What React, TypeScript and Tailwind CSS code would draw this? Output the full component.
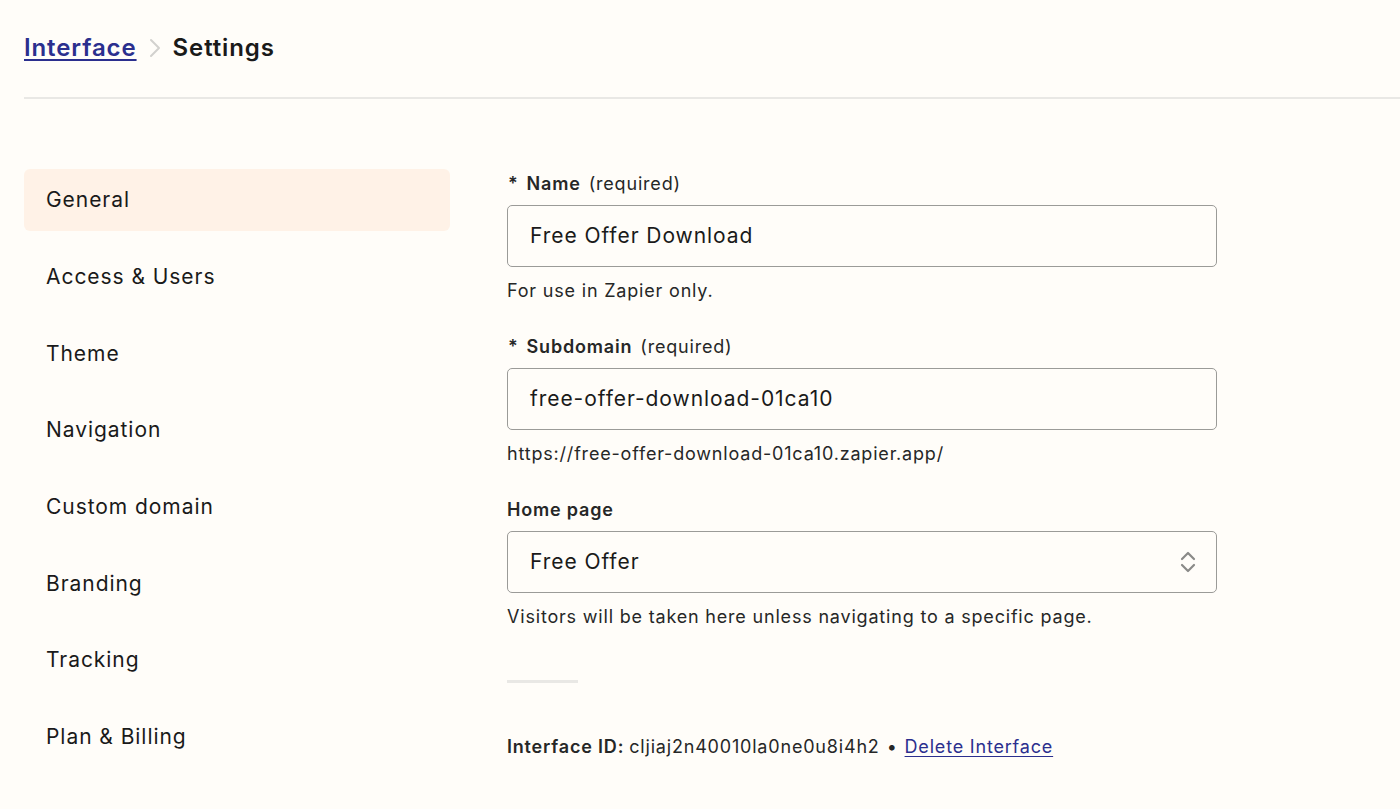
import React from 'react';

const navItems = [
  'General',
  'Access & Users',
  'Theme',
  'Navigation',
  'Custom domain',
  'Branding',
  'Tracking',
  'Plan & Billing',
];

function Field({
  label,
  required,
  value,
  help,
  select,
}: {
  label: string;
  required?: boolean;
  value: string;
  help: string;
  select?: boolean;
}) {
  return (
    <div className="flex flex-col">
      <div className="flex items-center h-6 text-[18px] tracking-[0.045em] text-[#262727]">
        {required && <span className="font-semibold mr-2 pl-[1px]">*</span>}
        <span className="font-semibold">{label}</span>
        {required && <span className="ml-2">(required)</span>}
      </div>
      <div className="mt-[10px] h-[62px] w-[710px] rounded-[5px] border border-[#9b9b98] bg-[#fffdf9] flex items-center justify-between pl-[22px] pr-[20px]">
        <span className="text-[21px] tracking-[0.045em] text-[#1a1a1a]">{value}</span>
        {select && (
          <svg width="16" height="24" viewBox="0 0 16 24" fill="none" stroke="#8a8a88" strokeWidth="2.2" strokeLinecap="round" strokeLinejoin="round">
            <path d="M2 9l6-6 6 6" />
            <path d="M2 15l6 6 6-6" />
          </svg>
        )}
      </div>
      <div className="mt-[11px] h-6 flex items-center text-[18px] tracking-[0.045em] text-[#262727]">{help}</div>
    </div>
  );
}

export default function App() {
  return (
    <div
      className="min-h-screen w-full bg-[#fffdf9] text-[#1a1a1a]"
      style={{ fontFamily: 'Inter, "Noto Sans", sans-serif' }}
    >
      <header className="ml-6 h-[99px] border-b-2 border-[#e9e8e5] flex items-center pb-[2px]">
        <a href="#" className="text-[24px] font-semibold tracking-[0.037em] text-[#2b2f8e] underline underline-offset-[3px] decoration-[2px]">
          Interface
        </a>
        <svg className="mx-[12px]" width="12" height="22" viewBox="0 0 12 22" fill="none" stroke="#d2d1ce" strokeWidth="2" strokeLinecap="round" strokeLinejoin="round">
          <path d="M2 3l8 8-8 8" />
        </svg>
        <span className="text-[24px] font-semibold tracking-[0.037em] text-[#1a1a1a]">Settings</span>
      </header>

      <div className="flex pl-6 pt-[70px]">
        <nav className="w-[426px] flex flex-col gap-[14.7px]">
          {navItems.map((item, i) => (
            <div
              key={item}
              className={`h-[62px] rounded-[6px] flex items-center pl-[22px] text-[21px] tracking-[0.045em] text-[#1a1a1a] ${
                i === 0 ? 'bg-[#fff2e7]' : ''
              }`}
            >
              {item}
            </div>
          ))}
        </nav>

        <main className="ml-[57px] flex flex-col pt-[2px]">
          <div className="flex flex-col gap-8">
            <Field label="Name" required value="Free Offer Download" help="For use in Zapier only." />
            <Field
              label="Subdomain"
              required
              value="free-offer-download-01ca10"
              help="https://free-offer-download-01ca10.zapier.app/"
            />
            <Field
              label="Home page"
              value="Free Offer"
              help="Visitors will be taken here unless navigating to a specific page."
              select
            />
          </div>
          <div className="mt-[52px] h-[3px] w-[71px] bg-[#e9e8e5]" />
          <div className="mt-[51px] text-[18px] tracking-[0.045em] text-[#262727] flex items-center h-6">
            <span className="font-semibold">Interface ID:</span>
            <span className="ml-[5px]">cljiaj2n40010la0ne0u8i4h2</span>
            <span className="mx-[7px]">•</span>
            <a href="#" className="text-[#2b2f8e] underline underline-offset-[3px]">
              Delete Interface
            </a>
          </div>
        </main>
      </div>
    </div>
  );
}
